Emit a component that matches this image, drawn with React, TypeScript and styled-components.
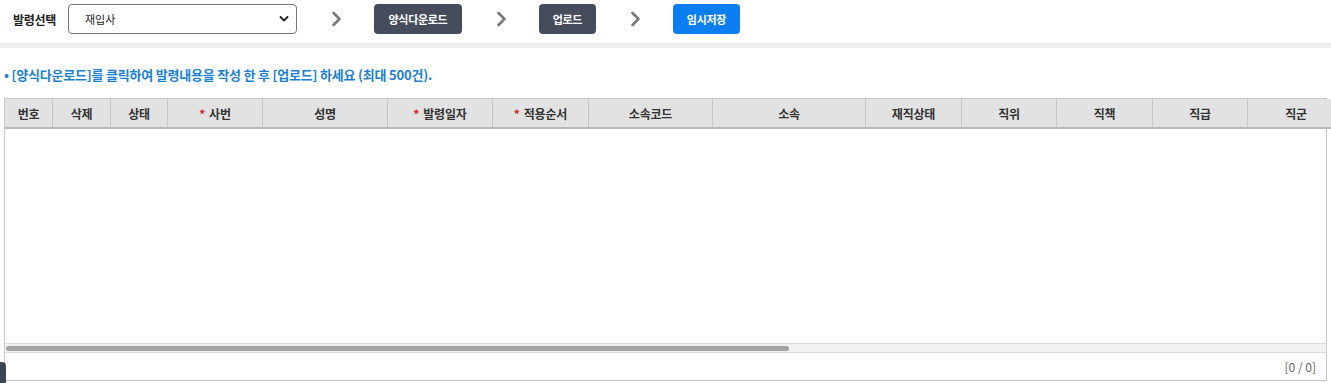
import React from 'react';
import styled, { createGlobalStyle } from 'styled-components';

const GlobalStyle = createGlobalStyle`
  html, body {
    margin: 0;
    padding: 0;
    background: #ffffff;
    font-family: "Noto Sans CJK KR", "Noto Sans", sans-serif;
    overflow: hidden;
  }
`;

const Page = styled.div`
  position: relative;
  width: 1331px;
  height: 383px;
  overflow: hidden;
`;

const TopBar = styled.div`
  display: flex;
  align-items: center;
  height: 30px;
  padding: 4px 0 0 13px;
`;

const Label = styled.span`
  font-size: 12px;
  font-weight: 700;
  color: #222;
  margin-right: 12px;
  letter-spacing: -0.3px;
`;

const Select = styled.div`
  box-sizing: border-box;
  display: flex;
  align-items: center;
  justify-content: space-between;
  width: 229px;
  height: 30px;
  padding: 0 7px 0 16px;
  border: 1px solid #767676;
  border-radius: 4px;
  font-size: 11px;
  color: #222;
`;

const Chevron = styled.svg`
  margin: 0 32px 0 34px;
`;

const StepButton = styled.button<{ $primary?: boolean; $w: number }>`
  box-sizing: border-box;
  width: ${(p) => p.$w}px;
  height: 30px;
  border: none;
  border-radius: 4px;
  background: ${(p) => (p.$primary ? '#0b7ef2' : '#454d5d')};
  color: #fff;
  font-family: inherit;
  font-size: 11px;
  font-weight: 700;
  letter-spacing: -0.3px;
  padding: 0;
`;

const Band = styled.div`
  height: 5px;
  margin-top: 9px;
  background: #efefef;
`;

const Notice = styled.p`
  margin: 17px 0 0 4px;
  font-size: 13px;
  font-weight: 700;
  color: #1a7fd4;
  line-height: 19px;
  letter-spacing: -0.2px;
`;

const Grid = styled.div`
  box-sizing: border-box;
  margin: 14px 0 0 4px;
  width: 1323px;
  border: 1px solid #c9c9c9;
  border-right: none;
`;

const HeadRow = styled.div`
  display: flex;
  width: 1340px;
  height: 28px;
  background: #e2e2e2;
  border-bottom: 2px solid #b8b8b8;
`;

const HeadCell = styled.div<{ $w: number }>`
  box-sizing: border-box;
  flex: 0 0 ${(p) => p.$w}px;
  display: flex;
  align-items: center;
  justify-content: center;
  border-right: 1px solid #c8c8c8;
  font-size: 12px;
  font-weight: 700;
  color: #333;
  letter-spacing: -0.2px;
`;

const Req = styled.span`
  color: #d22;
  margin-right: 4px;
`;

const Body = styled.div`
  height: 214px;
  border-right: 1px solid #c9c9c9;
`;

const ScrollTrack = styled.div`
  box-sizing: border-box;
  height: 10px;
  padding: 2px 1px;
  background: #f1f1f1;
  border-top: 1px solid #dcdcdc;
  border-bottom: 1px solid #dcdcdc;
  border-right: 1px solid #c9c9c9;
`;

const ScrollThumb = styled.div`
  width: 783px;
  height: 5px;
  border-radius: 3px;
  background: #a2a2a2;
`;

const Footer = styled.div`
  box-sizing: border-box;
  display: flex;
  align-items: center;
  justify-content: flex-end;
  height: 27px;
  padding-right: 10px;
  border-right: 1px solid #c9c9c9;
  font-size: 12px;
  color: #666;
`;

const SideTab = styled.div`
  position: absolute;
  left: 0;
  top: 362px;
  width: 6px;
  height: 24px;
  border-radius: 0 4px 4px 0;
  background: #3b4458;
`;

const columns: { label: string; w: number; req?: boolean }[] = [
  { label: '번호', w: 48 },
  { label: '삭제', w: 58 },
  { label: '상태', w: 57 },
  { label: '사번', w: 95, req: true },
  { label: '성명', w: 125 },
  { label: '발령일자', w: 105, req: true },
  { label: '적용순서', w: 96, req: true },
  { label: '소속코드', w: 124 },
  { label: '소속', w: 153 },
  { label: '재직상태', w: 96 },
  { label: '직위', w: 95 },
  { label: '직책', w: 96 },
  { label: '직급', w: 95 },
  { label: '직군', w: 97 },
];

const Arrow = () => (
  <Chevron width="11" height="16" viewBox="0 0 11 16">
    <path d="M2.5 2 L8.5 8 L2.5 14" fill="none" stroke="#7a7a7a" strokeWidth="2.6" strokeLinecap="round" strokeLinejoin="round" />
  </Chevron>
);

const App = () => {
  return (
    <Page>
      <GlobalStyle />
      <TopBar>
        <Label>발령선택</Label>
        <Select>
          <span>재입사</span>
          <svg width="10" height="8" viewBox="0 0 10 8">
            <path d="M1.5 2 L5 5.5 L8.5 2" fill="none" stroke="#222" strokeWidth="1.8" strokeLinecap="round" strokeLinejoin="round" />
          </svg>
        </Select>
        <Arrow />
        <StepButton $w={88}>양식다운로드</StepButton>
        <Arrow />
        <StepButton $w={57}>업로드</StepButton>
        <Arrow />
        <StepButton $w={67} $primary>
          임시저장
        </StepButton>
      </TopBar>
      <Band />
      <Notice>• [양식다운로드]를 클릭하여 발령내용을 작성 한 후 [업로드] 하세요 (최대 500건).</Notice>
      <Grid>
        <HeadRow>
          {columns.map((c) => (
            <HeadCell key={c.label} $w={c.w}>
              {c.req && <Req>*</Req>}
              {c.label}
            </HeadCell>
          ))}
        </HeadRow>
        <Body />
        <ScrollTrack>
          <ScrollThumb />
        </ScrollTrack>
        <Footer>[0 / 0]</Footer>
      </Grid>
      <SideTab />
    </Page>
  );
};

export default App;
